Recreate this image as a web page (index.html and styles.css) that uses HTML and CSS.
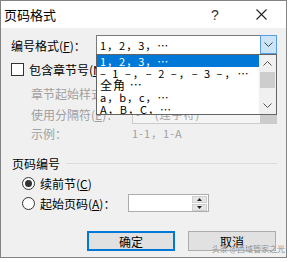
FILE: index.html
```html
<!DOCTYPE html>
<html lang="zh-CN">
<head>
    <meta charset="UTF-8">
    <title>页码格式</title>
    <link rel="stylesheet" href="styles.css">
</head>
<body>
    <div class="dialog">
        <div class="titlebar">
            <span class="title">页码格式</span>
            <span class="help">?</span>
            <span class="close">
                <svg width="11" height="11" viewBox="0 0 11 11"><path d="M0.5 0.5L10.5 10.5M10.5 0.5L0.5 10.5" stroke="#222" stroke-width="1.1" fill="none"/></svg>
            </span>
        </div>

        <div class="content">
            <!-- 编号格式 -->
            <div class="row row-format">
                <span class="label-format">编号格式(<u>F</u>)：</span>
                <div class="select">
                    <span class="select-value">1，2，3，…</span>
                    <span class="select-btn open">
                        <svg width="9" height="5" viewBox="0 0 9 5"><path d="M0.5 0.5L4.5 4.5L8.5 0.5" stroke="#444" fill="none"/></svg>
                    </span>
                    <div class="dropdown">
                        <ul class="dropdown-list">
                            <li class="selected">1，2，3，…</li>
                            <li class="dashed">– 1 –，– 2 –，– 3 –，…</li>
                            <li class="wide">全角 …</li>
                            <li>a，b，c，…</li>
                            <li>A，B，C，…</li>
                        </ul>
                        <div class="scrollbar">
                            <span class="sb-arrow">
                                <svg width="9" height="5" viewBox="0 0 9 5"><path d="M0.5 4.5L4.5 0.5L8.5 4.5" stroke="#555" fill="none"/></svg>
                            </span>
                            <span class="sb-thumb"></span>
                            <span class="sb-space"></span>
                            <span class="sb-arrow">
                                <svg width="9" height="5" viewBox="0 0 9 5"><path d="M0.5 0.5L4.5 4.5L8.5 0.5" stroke="#555" fill="none"/></svg>
                            </span>
                        </div>
                    </div>
                </div>
            </div>

            <div class="row row-check">
                <span class="checkbox"></span>
                <span>包含章节号(<u>N</u>)</span>
            </div>

            <div class="row row-sub disabled">
                <span class="label-sub">章节起始样式(<u>P</u>)：</span>
            </div>

            <div class="row row-sub row-sep disabled">
                <span class="label-sub">使用分隔符(<u>E</u>)：</span>
                <div class="select select-disabled">
                    <span class="select-value">-&nbsp;&nbsp;&nbsp;&nbsp;(连字符)</span>
                    <span class="select-btn"></span>
                </div>
            </div>

            <div class="row row-sub disabled">
                <span class="label-sub">示例：</span>
                <span class="example">1-1，1-A</span>
            </div>

            <!-- 页码编号 -->
            <div class="row group-title">页码编号</div>

            <div class="row row-radio">
                <span class="radio checked"></span>
                <span>续前节(<u>C</u>)</span>
            </div>

            <div class="row row-radio">
                <span class="radio-label">
                    <span class="radio"></span>
                    <span>起始页码(<u>A</u>)：</span>
                </span>
                <div class="spin">
                    <span class="spin-input"></span>
                    <span class="spin-btns">
                        <span class="spin-btn">
                            <svg width="5" height="3" viewBox="0 0 5 3"><path d="M2.5 0L5 3H0Z" fill="#222"/></svg>
                        </span>
                        <span class="spin-btn">
                            <svg width="5" height="3" viewBox="0 0 5 3"><path d="M0 0H5L2.5 3Z" fill="#222"/></svg>
                        </span>
                    </span>
                </div>
            </div>

            <div class="row row-buttons">
                <button class="btn btn-default">确定</button>
                <button class="btn">取消</button>
            </div>
        </div>

        <span class="watermark">头条 @西域管家之光</span>
    </div>
</body>
</html>
```

FILE: styles.css
```css
* { box-sizing: border-box; }

body {
    margin: 0;
    background: #fff;
    font-family: "Noto Sans CJK SC", "Microsoft YaHei", sans-serif;
    font-size: 12px;
    color: #000;
}

u { text-decoration: underline; text-underline-offset: 1px; }

.dialog {
    position: relative;
    width: 287px;
    height: 258px;
    border: 1px solid #838383;
    background: #f0f0f0;
}

.titlebar {
    display: flex;
    align-items: center;
    height: 27px;
    padding-left: 3px;
    padding-right: 2px;
    background: #fff;
}

.title {
    flex: 1;
    font-size: 13px;
}

.help,
.close {
    width: 46px;
    display: flex;
    justify-content: center;
}

.help {
    font-family: "Liberation Sans", sans-serif;
    font-size: 14px;
    color: #333;
}

.content {
    padding: 7px 9px 0 10px;
}

.row {
    display: flex;
    align-items: center;
    height: 18px;
    white-space: nowrap;
}

.row-format { height: 20px; }

.label-format { width: 85px; }

.select {
    position: relative;
    display: flex;
    align-items: center;
    width: 181px;
    height: 20px;
    border: 1px solid #7a7a7a;
    background: #fff;
}

.select-value {
    flex: 1;
    padding-left: 3px;
    font-size: 11px;
    letter-spacing: 1px;
}

.select-btn {
    position: absolute;
    top: -1px;
    right: -1px;
    width: 17px;
    height: 20px;
    display: flex;
    align-items: center;
    justify-content: center;
}

.select-btn.open {
    height: 19px;
    border: 1px solid #569de5;
    background: #cce4f7;
}

/* 펼쳐진 목록 */
.dropdown {
    position: absolute;
    top: 18px;
    left: -1px;
    z-index: 5;
    display: flex;
    width: 181px;
    height: 61px;
    border: 1px solid #646464;
    background: #fff;
}

.dropdown-list {
    flex: 1;
    margin: 0;
    padding: 0;
    list-style: none;
    overflow: hidden;
}

.dropdown-list li {
    height: 12px;
    line-height: 12px;
    padding-left: 3px;
    font-size: 11px;
    letter-spacing: 1px;
    white-space: nowrap;
}

.dropdown-list li.selected {
    background: #0078d7;
    color: #fff;
}

.dropdown-list li.dashed { letter-spacing: 2px; }

.dropdown-list li.wide { font-size: 12px; }

.scrollbar {
    display: flex;
    flex-direction: column;
    width: 17px;
    background: #f0f0f0;
}

.sb-arrow {
    height: 17px;
    display: flex;
    align-items: center;
    justify-content: center;
}

.sb-thumb {
    height: 16px;
    margin: 0 1px;
    background: #cdcdcd;
}

.sb-space { flex: 1; }

.row-check { margin-top: 5px; }

.checkbox {
    width: 13px;
    height: 13px;
    margin-right: 5px;
    border: 1px solid #333;
    background: #fff;
}

.row-sub {
    padding-left: 20px;
    margin-top: 6px;
}

.row-sub.disabled { color: #a0a0a0; }

.label-sub { width: 101px; }

.row-sep {
    height: 20px;
    margin-top: 2px;
}

.row-sep + .row-sub { margin-top: 0; }

.select-disabled {
    width: 145px;
    border-color: #cccccc;
    background: #f4f4f4;
}

.select-disabled .select-value { color: #a0a0a0; }

.select-disabled .select-btn {
    top: 0;
    right: 0;
    width: 16px;
    height: 18px;
    background: #cccccc;
}

.example {
    font-size: 11px;
    letter-spacing: 1px;
}

.group-title {
    margin-top: 12px;
    padding-left: 1px;
}

.group-title::after {
    content: "";
    flex: 1;
    height: 1px;
    margin-left: 6px;
    background: #dcdcdc;
}

.row-radio {
    margin-top: 2px;
    padding-left: 11px;
}

.radio-label {
    display: flex;
    align-items: center;
    width: 106px;
}

.radio {
    position: relative;
    width: 13px;
    height: 13px;
    margin-right: 5px;
    border: 1px solid #333;
    border-radius: 50%;
    background: #fff;
}

.radio.checked::after {
    content: "";
    position: absolute;
    top: 2px;
    left: 2px;
    width: 7px;
    height: 7px;
    border-radius: 50%;
    background: #333;
}

.spin {
    display: flex;
    width: 81px;
    height: 18px;
    border: 1px solid #acacac;
    background: #fff;
}

.spin-input { flex: 1; }

.spin-btns {
    display: flex;
    flex-direction: column;
    width: 16px;
}

.spin-btn {
    flex: 1;
    display: flex;
    align-items: center;
    justify-content: center;
    margin: 1px 1px 0 0;
    background: #e5e5e5;
    border: 1px solid #cfcfcf;
}

.row-buttons {
    height: 20px;
    margin-top: 19px;
    padding-right: 1px;
    justify-content: flex-end;
    gap: 13px;
}

.btn {
    width: 88px;
    height: 20px;
    padding: 0;
    border: 1px solid #adadad;
    background: #e1e1e1;
    font-family: inherit;
    font-size: 12px;
    color: #000;
}

.btn-default {
    border-color: #0078d7;
    box-shadow: inset 0 0 0 1px #0078d7;
}

.watermark {
    position: absolute;
    right: 1px;
    bottom: 3px;
    font-size: 8px;
    color: #888;
    text-shadow: 0 0 1px #fff;
}
```
